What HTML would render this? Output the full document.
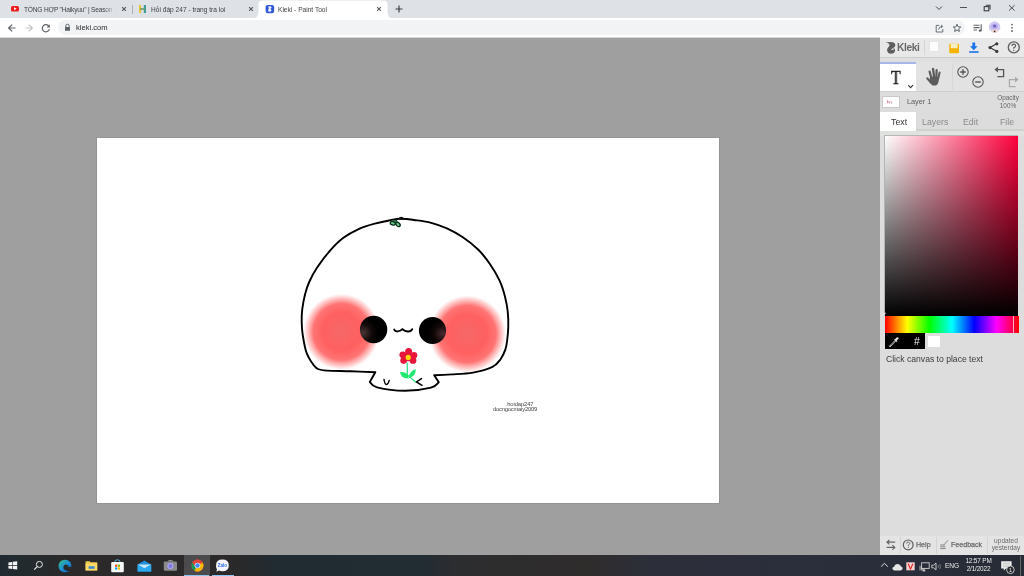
<!DOCTYPE html>
<html><head><meta charset="utf-8">
<style>
*{margin:0;padding:0;box-sizing:border-box}
html,body{width:1024px;height:576px;overflow:hidden;background:#9f9f9f;font-family:"Liberation Sans",sans-serif;-webkit-font-smoothing:antialiased}
.a{will-change:transform}
.a{position:absolute}
svg{position:absolute;overflow:visible}
#tabs{left:0;top:0;width:1024px;height:18px;background:#dee1e6}
#tool{left:0;top:18px;width:1024px;height:20px;background:#fff}
#omni{left:57.5px;top:20.2px;width:907.3px;height:15.4px;background:#f1f3f4;border-radius:7.7px}
#sep{left:0;top:37px;width:880px;height:1px;background:#d8d8d8}
#cv{left:97px;top:138px;width:622px;height:365px;background:#fff;box-shadow:0 0 0 1px rgba(60,60,60,.1)}
#side{left:880px;top:38px;width:144px;height:517px;background:#dddddd}
#task{left:0;top:555px;width:1024px;height:21px;background:linear-gradient(90deg,#1f2a30 0px,#262a2c 45px,#2b2929 70px,#2b2929 230px,#202b32 278px,#212c33 420px,#2c2d2f 455px,#2f2c2c 590px,#2c2f3a 650px,#2a2e3b 880px,#272b35 1024px)}
.tt{font-size:6.6px;color:#3f4246;white-space:nowrap;line-height:9px}
</style></head><body>
<!-- TAB STRIP -->
<div class="a" id="tabs"></div>
<!-- tab1 -->
<svg style="left:10px;top:5px" width="10" height="8"><rect x="1" y="1" width="8" height="5.6" rx="1.6" fill="#ee1b1b"/><path d="M4 2.3 L6.6 3.8 L4 5.3Z" fill="#fff"/></svg>
<div class="a tt" style="left:24px;top:4.5px;width:92px;overflow:hidden;letter-spacing:-.2px;-webkit-mask-image:linear-gradient(90deg,#000 86%,transparent)">TỔNG HỢP "Haikyuu" | Season 1</div>
<svg style="left:121px;top:6px" width="6" height="6"><path d="M1.1 1.1L4.9 4.9M4.9 1.1L1.1 4.9" stroke="#55585c" stroke-width="1.05"/></svg>
<div class="a" style="left:132px;top:5px;width:1px;height:9px;background:#aeb1b6"></div>
<!-- tab2 -->
<svg style="left:138px;top:4px" width="10" height="10"><rect x="1" y="1" width="2.2" height="8" fill="#e9c43a"/><rect x="5.8" y="1" width="2.2" height="8" fill="#3e9c9a"/><rect x="2" y="4.2" width="5" height="1.6" fill="#6a9c6a"/></svg>
<div class="a tt" style="left:150.5px;top:4.5px">Hỏi đáp 247 - trang tra loi</div>
<svg style="left:248px;top:6px" width="6" height="6"><path d="M1.1 1.1L4.9 4.9M4.9 1.1L1.1 4.9" stroke="#55585c" stroke-width="1.05"/></svg>
<!-- active tab -->
<svg style="left:252px;top:0" width="144" height="19"><path d="M0 18.5 Q6.4 18.5 6.4 12 L6.4 4.6 Q6.4 .4 10.6 .4 L131.4 .4 Q135.6 .4 135.6 4.6 L135.6 12 Q135.6 18.5 142 18.5 Z" fill="#fff"/></svg>
<svg style="left:265px;top:4px" width="10" height="10"><rect x="0.6" y="0.9" width="8.6" height="8.4" rx="2.2" fill="#3359d6"/><path d="M3.2 2.6Q5.6 1.8 6.6 3Q6.8 4.2 5.4 4.8Q6.8 5.6 6.4 7Q5.2 8.2 3.6 7.6Q2.6 6.8 3.4 5.6Q4.4 4.6 3.2 2.6Z" fill="#eef4ff"/></svg>
<div class="a tt" style="left:278px;top:4.5px">Kleki - Paint Tool</div>
<svg style="left:376px;top:6px" width="6" height="6"><path d="M1.1 1.1L4.9 4.9M4.9 1.1L1.1 4.9" stroke="#55585c" stroke-width="1.05"/></svg>
<svg style="left:395px;top:5px" width="8" height="8"><path d="M4 .5V7.5M.5 4H7.5" stroke="#3c4043" stroke-width="1.2"/></svg>
<!-- window controls -->
<svg style="left:934.5px;top:4.5px" width="8" height="6"><path d="M1 1.5L4 4.5L7 1.5" stroke="#45484c" stroke-width="1" fill="none"/></svg>
<div class="a" style="left:959.6px;top:7px;width:6.6px;height:.9px;background:#505356"></div>
<svg style="left:983px;top:4px" width="8" height="8"><rect x="1.2" y="2.6" width="4.6" height="4.2" stroke="#3c4043" stroke-width="1.1" fill="none"/><path d="M2.8 1.2H7V5.4" stroke="#3c4043" stroke-width="1.1" fill="none"/></svg>
<svg style="left:1008px;top:4px" width="8" height="8"><path d="M1 1.2L6.6 6.6M6.6 1.2L1 6.6" stroke="#3c4043" stroke-width="0.9"/></svg>

<!-- TOOLBAR -->
<div class="a" id="tool"></div>
<div class="a" id="omni"></div>
<div class="a" id="sep"></div>
<svg style="left:7px;top:23px" width="10" height="10"><path d="M8.5 5H2M5.2 1.6L1.6 5L5.2 8.4" stroke="#5f6368" stroke-width="1.2" fill="none"/></svg>
<svg style="left:23.5px;top:23px" width="10" height="10"><path d="M1.5 5H8M4.8 1.6L8.4 5L4.8 8.4" stroke="#c2c4c7" stroke-width="1.2" fill="none"/></svg>
<svg style="left:41px;top:23px" width="10" height="10"><path d="M7.9 3.3A3.6 3.6 0 1 0 8.4 6" stroke="#5f6368" stroke-width="1.2" fill="none"/><path d="M8.8 1.2V4.4H5.6Z" fill="#5f6368"/></svg>
<svg style="left:64px;top:23px" width="7" height="9"><path d="M1.8 4V2.9A1.7 1.7 0 0 1 5.2 2.9V4" stroke="#5f6368" stroke-width="1" fill="none"/><rect x="1" y="4" width="5" height="3.8" rx=".6" fill="#5f6368"/></svg>
<div class="a" style="left:75.8px;top:23.3px;font-size:7.6px;color:#2a2b2e;line-height:10px">kleki.com</div>
<svg style="left:935px;top:23.5px" width="10" height="9"><path d="M4.2 1.4H1.2V8H7.8V5" stroke="#5f6368" stroke-width=".9" fill="none"/><path d="M3.6 5.6Q3.8 2.6 7.2 2.4M6 .8L7.8 2.4L6 4" stroke="#5f6368" stroke-width=".9" fill="none"/></svg>
<svg style="left:952px;top:23px" width="10" height="10"><path d="M5 1.2L6.1 3.8L8.8 4L6.7 5.8L7.4 8.5L5 7L2.6 8.5L3.3 5.8L1.2 4L3.9 3.8Z" stroke="#5f6368" stroke-width="1" fill="none" stroke-linejoin="round"/></svg>
<svg style="left:972px;top:23px" width="12" height="10"><path d="M1.5 2.2H7.6M1.5 4.6H7.6M1.5 7H5" stroke="#5f6368" stroke-width="1.1"/><path d="M9.2 1.2V7.4" stroke="#5f6368" stroke-width="1.1"/><ellipse cx="8.2" cy="7.6" rx="1.5" ry="1.2" fill="#5f6368"/></svg>
<svg style="left:988px;top:21px" width="14" height="12"><circle cx="6.6" cy="6" r="5.8" fill="#d3ccf4"/><ellipse cx="6.6" cy="5.4" rx="3.6" ry="3" fill="#b9b0ec"/><path d="M2.6 9.8Q6.6 7.4 10.6 9.8Q8.6 11.8 6.6 11.8Q4.6 11.8 2.6 9.8Z" fill="#f6d7d2"/><circle cx="6.6" cy="5" r="1.5" fill="#6a5cc0"/><rect x="5.8" y="9.6" width="1.6" height="1.6" fill="#3a2b2b"/></svg>
<svg style="left:1010px;top:23px" width="4" height="10"><circle cx="2" cy="1.6" r=".9" fill="#5f6368"/><circle cx="2" cy="4.8" r=".9" fill="#5f6368"/><circle cx="2" cy="8" r=".9" fill="#5f6368"/></svg>

<!-- CANVAS -->
<div class="a" id="cv"></div>
<svg style="left:97px;top:138px" width="622" height="365" viewBox="97 138 622 365">
<defs>
<radialGradient id="bl"><stop offset="0" stop-color="#f66868"/><stop offset=".5" stop-color="#ff6060"/><stop offset=".74" stop-color="#ff6464" stop-opacity=".9"/><stop offset="1" stop-color="#ff7070" stop-opacity="0"/></radialGradient>
<radialGradient id="e1" cx=".1" cy=".62" r=".55" fx=".12" fy=".62"><stop offset="0" stop-color="#4a3434"/><stop offset=".6" stop-color="#120a0a"/><stop offset="1" stop-color="#000"/></radialGradient>
<radialGradient id="e2" cx=".9" cy=".62" r=".55" fx=".88" fy=".62"><stop offset="0" stop-color="#4a2a32"/><stop offset=".6" stop-color="#120808"/><stop offset="1" stop-color="#000"/></radialGradient>
</defs>
<path id="hd" d="M375.3 372.2 C371.2 372.1 358.9 371.6 350.8 371.3 C342.8 371.0 332.5 371.0 327.0 370.6 C321.5 370.2 320.3 370.0 318.0 369.0 C315.7 368.0 314.0 365.3 313.2 364.6 C312.6 363.6 310.6 361.0 309.4 358.6 C308.2 356.2 306.9 354.5 305.8 350.4 C304.7 346.3 303.3 338.7 302.6 334.0 C301.9 329.3 301.8 326.1 301.7 322.0 C301.6 317.9 301.7 314.3 302.2 309.7 C302.8 305.1 303.8 299.0 305.0 294.4 C306.2 289.8 307.2 286.4 309.2 282.0 C311.2 277.6 313.3 273.2 316.8 268.0 C320.3 262.8 325.6 255.7 330.0 250.7 C334.4 245.7 338.5 241.5 343.4 237.8 C348.2 234.2 353.9 231.2 359.1 228.8 C364.3 226.5 369.5 225.1 374.7 223.7 C379.9 222.3 386.1 221.0 390.3 220.2 C394.5 219.4 395.8 218.8 400.0 218.8 C404.2 218.8 410.4 219.5 415.6 220.2 C420.8 220.9 426.0 221.5 431.2 222.9 C436.5 224.3 441.7 226.1 446.9 228.4 C452.1 230.8 457.3 233.5 462.5 237.0 C467.7 240.5 473.5 245.0 478.1 249.5 C482.7 254.0 486.3 258.8 489.9 264.0 C493.5 269.2 497.1 275.1 499.6 280.7 C502.2 286.3 503.9 292.3 505.2 297.4 C506.5 302.5 507.2 306.5 507.7 311.3 C508.2 316.1 508.4 321.2 508.3 326.0 C508.2 330.8 507.7 336.1 507.2 340.0 C506.7 343.9 506.5 346.2 505.4 349.4 C504.3 352.6 502.8 356.2 500.6 359.2 C498.4 362.2 496.6 365.0 492.0 367.2 C487.4 369.4 479.7 371.4 473.0 372.6 C466.3 373.8 458.5 374.0 452.0 374.4 C445.5 374.8 437.2 375.1 434.2 375.2 L438.8 382.3 C437.5 383.2 436.6 386.2 431.0 387.6 C425.4 389.0 414.0 390.8 405.0 390.8 C396.0 390.8 382.9 388.9 377.0 387.4 C371.1 385.9 371.0 382.9 369.8 382.0 Z" fill="#fff"/>
<circle cx="341.5" cy="331.8" r="38" fill="url(#bl)"/>
<circle cx="467.4" cy="334" r="38.5" fill="url(#bl)"/>
<path d="M375.3 372.2 C371.2 372.1 358.9 371.6 350.8 371.3 C342.8 371.0 332.5 371.0 327.0 370.6 C321.5 370.2 320.3 370.0 318.0 369.0 C315.7 368.0 314.0 365.3 313.2 364.6 C312.6 363.6 310.6 361.0 309.4 358.6 C308.2 356.2 306.9 354.5 305.8 350.4 C304.7 346.3 303.3 338.7 302.6 334.0 C301.9 329.3 301.8 326.1 301.7 322.0 C301.6 317.9 301.7 314.3 302.2 309.7 C302.8 305.1 303.8 299.0 305.0 294.4 C306.2 289.8 307.2 286.4 309.2 282.0 C311.2 277.6 313.3 273.2 316.8 268.0 C320.3 262.8 325.6 255.7 330.0 250.7 C334.4 245.7 338.5 241.5 343.4 237.8 C348.2 234.2 353.9 231.2 359.1 228.8 C364.3 226.5 369.5 225.1 374.7 223.7 C379.9 222.3 386.1 221.0 390.3 220.2 C394.5 219.4 395.8 218.8 400.0 218.8 C404.2 218.8 410.4 219.5 415.6 220.2 C420.8 220.9 426.0 221.5 431.2 222.9 C436.5 224.3 441.7 226.1 446.9 228.4 C452.1 230.8 457.3 233.5 462.5 237.0 C467.7 240.5 473.5 245.0 478.1 249.5 C482.7 254.0 486.3 258.8 489.9 264.0 C493.5 269.2 497.1 275.1 499.6 280.7 C502.2 286.3 503.9 292.3 505.2 297.4 C506.5 302.5 507.2 306.5 507.7 311.3 C508.2 316.1 508.4 321.2 508.3 326.0 C508.2 330.8 507.7 336.1 507.2 340.0 C506.7 343.9 506.5 346.2 505.4 349.4 C504.3 352.6 502.8 356.2 500.6 359.2 C498.4 362.2 496.6 365.0 492.0 367.2 C487.4 369.4 479.7 371.4 473.0 372.6 C466.3 373.8 458.5 374.0 452.0 374.4 C445.5 374.8 437.2 375.1 434.2 375.2 L438.8 382.3 C437.5 383.2 436.6 386.2 431.0 387.6 C425.4 389.0 414.0 390.8 405.0 390.8 C396.0 390.8 382.9 388.9 377.0 387.4 C371.1 385.9 371.0 382.9 369.8 382.0 Z" fill="none" stroke="#000" stroke-width="1.9" stroke-linejoin="round"/>
<circle cx="373.6" cy="329.5" r="13.7" fill="url(#e1)"/>
<circle cx="432.5" cy="330.5" r="13.6" fill="url(#e2)"/>
<path d="M394.2 329.6 C395.2 332 399.4 332.2 402.4 329.2 C405.4 331.8 410.6 332.8 412.2 329.2" stroke="#000" stroke-width="1.9" fill="none" stroke-linecap="round"/>
<path d="M384 379.4 Q384.8 384.4 386.4 384.6 Q388.4 384 389.2 380.4" stroke="#000" stroke-width="1.4" fill="none" stroke-linecap="round"/>
<path d="M421.5 378.6 L416.4 382 L422 385.4" stroke="#000" stroke-width="1.5" fill="none" stroke-linecap="round"/>
<path d="M407.2 362.5 L407.4 375 L415.6 382" stroke="#33e088" stroke-width="1.3" fill="none"/>
<path d="M400 372.2Q404.6 371.6 407.6 374.2Q409 376.6 408.6 378.4Q404.4 378.8 402 376.4Q400.4 374.6 400 372.2Z" fill="#22e870"/>
<path d="M415.8 369Q416 373 413.6 375.6Q411.4 377.8 408.8 378Q408.6 374.6 411 372Q413 369.8 415.8 369Z" fill="#22e870"/>
<g fill="#e8163a"><circle cx="408.6" cy="351.6" r="3.5"/><circle cx="402.8" cy="354.8" r="3.4"/><circle cx="414" cy="355.2" r="3.3"/><circle cx="403.6" cy="360.6" r="3.3"/><circle cx="413" cy="360.4" r="3.4"/><circle cx="408.4" cy="357.2" r="4"/></g>
<circle cx="408.2" cy="357.4" r="2.6" fill="#f8d800"/>
<ellipse cx="392.8" cy="223.3" rx="2.6" ry="1.7" transform="rotate(15 392.8 223.3)" fill="#6cc890" stroke="#042a12" stroke-width="1.25"/>
<ellipse cx="398" cy="224.4" rx="2.6" ry="1.7" transform="rotate(45 398 224.4)" fill="#6cc890" stroke="#042a12" stroke-width="1.25"/>
<ellipse cx="395.2" cy="221.3" rx="2" ry="1.2" fill="#2f7a4a" stroke="#06361a" stroke-width=".8"/>
<ellipse cx="401.2" cy="218.2" rx="2.4" ry="1.5" fill="#111"/>
<text x="533.4" y="405.6" text-anchor="end" font-size="5.8" fill="#444" font-family="Liberation Sans" letter-spacing="-.1">hoidap247</text>
<text x="537" y="410.6" text-anchor="end" font-size="5.8" fill="#444" font-family="Liberation Sans" letter-spacing="-.2">docngocmaiy2009</text>
</svg>

<!-- SIDEBAR -->
<div class="a" id="side"></div>
<div class="a" style="left:880px;top:38px;width:144px;height:18.5px;background:#e8e8e8"></div>
<div class="a" style="left:880px;top:56.5px;width:144px;height:1.5px;background:#cdcdcd"></div>
<div class="a" style="left:880px;top:58px;width:144px;height:4px;background:#dfdfdf"></div>
<div class="a" style="left:923.5px;top:40px;width:1px;height:15px;background:#d6d6d6"></div>
<!-- logo -->
<svg style="left:885px;top:40.5px" width="12" height="14"><path d="M.4 1.6Q4.4 .4 8 1.2Q10.6 2 10.4 4.6Q10.2 6.2 8.6 6.8Q10.6 8 10 10.4Q9 12.8 6 12.8Q3 12.8 2.2 10.2Q1.6 7.8 3.8 5.6Q5 4.4 4.2 3Q3 1.8 .4 1.6Z" fill="#5e5e5e"/><path d="M6 8.4L8.4 6.8L8.6 9.2Z" fill="#e6e6e6"/></svg>
<div class="a" style="left:897.4px;top:42.2px;font-size:10.2px;font-weight:bold;color:#666;line-height:12px;letter-spacing:-.35px">Kleki</div>
<div class="a" style="left:930px;top:42.3px;width:7.6px;height:9.4px;background:#fdfdfd;box-shadow:0 0 0 .5px #e0e0e0"></div>
<svg style="left:948px;top:43px" width="12" height="11"><rect x="1.2" y="0.8" width="9.8" height="9.4" rx="1" fill="#f3b500"/><rect x="2.6" y="0.8" width="7" height="4.4" fill="#f9edc4"/></svg>
<svg style="left:968px;top:42px" width="12" height="12"><path d="M4.4 0.4H7.2V4.2H9.6L5.8 8.2L2 4.2H4.4Z" fill="#1a73e8"/><rect x="1.2" y="9.2" width="9.4" height="1.6" fill="#1a73e8"/></svg>
<svg style="left:988px;top:42px" width="12" height="12"><path d="M8.6 1.8L2 5.6L8.6 9.2" stroke="#3a3a3a" stroke-width="1.2" fill="none"/><circle cx="8.8" cy="1.8" r="1.6" fill="#3a3a3a"/><circle cx="2" cy="5.6" r="1.6" fill="#3a3a3a"/><circle cx="8.8" cy="9.4" r="1.6" fill="#3a3a3a"/></svg>
<svg style="left:1007px;top:41px" width="14" height="14"><circle cx="6.8" cy="6.4" r="5.5" stroke="#606060" stroke-width="1.35" fill="none"/><path d="M5 5Q5 3.2 6.8 3.2Q8.6 3.2 8.6 4.8Q8.6 6 6.8 6.6V7.8" stroke="#606060" stroke-width="1.2" fill="none"/><circle cx="6.8" cy="9.4" r=".65" fill="#555"/></svg>
<!-- tool row -->
<div class="a" style="left:880px;top:62px;width:144px;height:29px;background:#e2e2e2"></div>
<div class="a" style="left:880px;top:62px;width:36px;height:29px;background:#fff;border-top:2px solid #a6b6e8"></div>
<div class="a" style="left:880px;top:91px;width:144px;height:1px;background:#cfcfcf"></div>
<div class="a" style="left:952px;top:63px;width:1px;height:27px;background:#d8d8d8"></div>

<div class="a" style="left:891.4px;top:66.1px;font-family:'Liberation Serif',serif;font-size:17.5px;color:#1e1e1e;line-height:20px;-webkit-text-stroke:.35px #1e1e1e;transform:scale(.91,1.1);transform-origin:0 0">T</div>
<svg style="left:907px;top:84px" width="8" height="5"><path d="M1.2 1.2L3.6 3.6L6 1.2" stroke="#333" stroke-width="1.1" fill="none"/></svg>
<svg style="left:916px;top:62px" width="36" height="30"><g stroke="#5c5c5c" stroke-linecap="round" fill="none"><path d="M13.6 9.6L15.4 16" stroke-width="2.2"/><path d="M17 7L18.2 15" stroke-width="2.3"/><path d="M20.6 8.2L20.4 15.4" stroke-width="2.2"/><path d="M23.6 10.4L22.2 16.4" stroke-width="2"/><path d="M11.4 16.4L15 20.4" stroke-width="2.2"/></g><path d="M14 14.6L23.2 14.8L22.6 19.6Q21.4 23.6 19.6 23.6L16.6 23.6Q15.2 22.4 13.6 20.4Z" fill="#5c5c5c"/></svg>
<svg style="left:956px;top:65px" width="14" height="14"><circle cx="7" cy="7" r="5.2" stroke="#555" stroke-width="1.1" fill="none"/><path d="M7 4.2V9.8M4.2 7H9.8" stroke="#555" stroke-width="1.4"/></svg>
<svg style="left:970.5px;top:74.5px" width="14" height="14"><circle cx="7" cy="7" r="5.2" stroke="#555" stroke-width="1.1" fill="none"/><path d="M4.2 7H9.8" stroke="#555" stroke-width="1.4"/></svg>
<svg style="left:993px;top:66px" width="13" height="13"><path d="M4.8 3.6H10.6V10.6H4.4" stroke="#555" stroke-width="1.3" fill="none"/><path d="M1.4 3.6L5 0.8V6.4Z" fill="#555"/></svg>
<svg style="left:1007px;top:76px" width="13" height="13"><path d="M8.2 3.6H2.4V10.6H8.6" stroke="#aaa" stroke-width="1.2" fill="none"/><path d="M11.6 3.6L8 0.8V6.4Z" fill="#aaa"/></svg>
<!-- layer row -->
<div class="a" style="left:882px;top:96px;width:17.5px;height:12px;background:#fff;border:1px solid #c8c8c8"></div>
<svg style="left:886px;top:99px" width="10" height="6"><path d="M1.5 1.2V4.2M2 3Q3.4 1.4 3.6 4.4M4.4 2L6 3.4L5.2 4.6" stroke="#c94a6a" stroke-width=".6" fill="none"/></svg>
<div class="a" style="left:906.8px;top:97.4px;font-size:7.3px;color:#5e5e5e;line-height:9px">Layer 1</div>
<div class="a" style="left:991px;top:93.6px;width:34px;text-align:center;font-size:6.4px;color:#666;line-height:8px">Opacity<br>100%</div>
<!-- tabs -->
<div class="a" style="left:880px;top:112px;width:144px;height:18.8px;background:#dcdcdc;border-bottom:2px solid #d0d0d0"></div>
<div class="a" style="left:880px;top:112px;width:36.3px;height:18.8px;background:#fff"></div>
<div class="a" style="left:890.5px;top:115.5px;font-size:8.8px;color:#333;line-height:12px">Text</div>
<div class="a" style="left:921.5px;top:115.5px;font-size:8.8px;color:#8a8a8a;line-height:12px">Layers</div>
<div class="a" style="left:963px;top:115.5px;font-size:8.8px;color:#8a8a8a;line-height:12px">Edit</div>
<div class="a" style="left:999.5px;top:115.5px;font-size:8.8px;color:#8a8a8a;line-height:12px">File</div>
<!-- color picker -->
<div class="a" style="left:880px;top:130.8px;width:144px;height:5px;background:#e0e2e0"></div>
<div class="a" style="left:884.6px;top:136px;width:133.2px;height:180.2px;background:linear-gradient(to bottom,rgba(0,0,0,0),#000),linear-gradient(to right,#fff,#ff003c);box-shadow:-.5px -.5px 0 .3px #aaa"></div>
<div class="a" style="left:884.6px;top:316.2px;width:133.6px;height:16.8px;background:linear-gradient(to right,#f00 0%,#ff0 16.67%,#0f0 33.33%,#0ff 50%,#00f 66.67%,#f0f 83.33%,#f00 100%)"></div>
<div class="a" style="left:1012.6px;top:316.2px;width:.8px;height:16.8px;background:#fff;opacity:.7"></div>
<svg style="left:882px;top:311px" width="6" height="6"><path d="M1.5 4.5A2.4 2.4 0 0 1 4 2" stroke="#fff" stroke-width=".7" fill="none"/></svg>
<div class="a" style="left:885.4px;top:333.2px;width:39.8px;height:16.1px;background:#000"></div>
<svg style="left:888px;top:336px" width="12" height="12"><path d="M2 10.2L7.4 4.8" stroke="#e0e0e0" stroke-width="1.6" stroke-linecap="round"/><path d="M2.6 9.6L7 5.2" stroke="#000" stroke-width=".6"/><path d="M6.2 3.6L8.6 6L9.4 5.2L8.8 4.6L10.4 3Q11 2 10.2 1.4Q9.4 .8 8.6 1.6L7 3.2L6.6 2.8Z" fill="#e0e0e0"/></svg>
<div class="a" style="left:913.6px;top:335.6px;font-size:10.4px;color:#f0f0f0;line-height:11px">#</div>
<div class="a" style="left:927.8px;top:336px;width:11.8px;height:11.2px;background:#fff"></div>
<div class="a" style="left:885.8px;top:353.6px;font-size:8.6px;color:#3a3a3a;line-height:11px">Click canvas to place text</div>
<!-- footer -->
<div class="a" style="left:880px;top:535.5px;width:144px;height:19px;background:#e4e4e4"></div>
<div class="a" style="left:900.3px;top:536.5px;width:.8px;height:17px;background:#d4d4d4"></div>
<div class="a" style="left:936.2px;top:536.5px;width:.8px;height:17px;background:#d4d4d4"></div>
<div class="a" style="left:987.4px;top:536.5px;width:.8px;height:17px;background:#d4d4d4"></div>
<svg style="left:885px;top:539px" width="12" height="12"><path d="M10.2 3.2H2.2M4.4 1L2 3.2L4.4 5.4M1.6 8.4H9.6M7.4 6.2L9.8 8.4L7.4 10.6" stroke="#666" stroke-width="1.2" fill="none"/></svg>
<svg style="left:902px;top:539px" width="12" height="12"><circle cx="6.2" cy="5.9" r="4.9" stroke="#5e5e5e" stroke-width="1.2" fill="none"/><path d="M4.6 4.6Q4.6 3 6.2 3Q7.8 3 7.8 4.4Q7.8 5.4 6.3 6V7.2" stroke="#666" stroke-width=".9" fill="none"/><circle cx="6.3" cy="8.6" r=".55" fill="#666"/></svg>
<div class="a" style="left:915.8px;top:540.6px;font-size:7.1px;color:#6a6a6a;line-height:9px;-webkit-text-stroke:.25px #6a6a6a">Help</div>
<svg style="left:939px;top:539px" width="10" height="11"><path d="M1.2 6H5.6M1.2 7.8H6.4M1.2 9.6H6.6" stroke="#6a6a6a" stroke-width=".75"/><path d="M4.6 6.2L8.8 1.4" stroke="#888" stroke-width="1"/></svg>
<div class="a" style="left:951px;top:540.6px;font-size:7.1px;color:#6a6a6a;line-height:9px;-webkit-text-stroke:.25px #6a6a6a">Feedback</div>
<div class="a" style="left:988px;top:537.2px;width:36px;text-align:center;font-size:6.6px;color:#6a6a6a;line-height:7.4px">updated<br>yesterday</div>

<!-- TASKBAR -->
<div class="a" id="task"></div>
<!-- start -->
<svg style="left:8px;top:561px" width="10" height="9"><path d="M0.4 1.4L4.2 0.9V4.1H0.4ZM4.8 0.8L9.2 0.2V4.1H4.8ZM0.4 4.7H4.2V7.9L0.4 7.4ZM4.8 4.7H9.2V8.6L4.8 8Z" fill="#f4f4f4"/></svg>
<svg style="left:33px;top:560px" width="11" height="11"><circle cx="6.4" cy="4.4" r="3" stroke="#e8e8e8" stroke-width="1" fill="none"/><path d="M4.2 6.6L1.2 9.6" stroke="#e8e8e8" stroke-width="1.2"/></svg>
<!-- edge -->
<svg style="left:58px;top:559px" width="15" height="14"><defs><linearGradient id="eg" x1="0" y1="0" x2="1" y2="1"><stop offset="0" stop-color="#39c27a"/><stop offset=".5" stop-color="#1e90d8"/><stop offset="1" stop-color="#0b5fb8"/></linearGradient></defs><path d="M13.4 7.8Q13.6 2.6 9.6 1.2Q5.2 -.2 2.2 2.6Q.2 4.8 .6 8Q1.2 11.8 5.2 13Q9 13.8 12 11.8Q9 12.4 7 11Q5 9.6 5.4 7.4Q5.8 5.6 8 5.4Q10 5.4 10.6 7Q9.8 7.8 7.8 7.8Z" fill="url(#eg)"/></svg>
<!-- explorer -->
<svg style="left:85px;top:560px" width="13" height="11"><path d="M.6 1.2H4.6L5.6 2.2H12.2V10.4H.6Z" fill="#f3c64f"/><rect x=".6" y="3.4" width="11.6" height="7" fill="#ffd966"/><rect x="3.6" y="6.2" width="6" height="2.6" fill="#3a8ccf"/></svg>
<!-- store -->
<svg style="left:110px;top:559px" width="15" height="14"><path d="M4.6 3.2Q4.6 .8 7.4 .8Q10.2 .8 10.2 3.2" stroke="#56b8e8" stroke-width="1" fill="none"/><rect x="1.2" y="3" width="12.6" height="10.2" rx="1" fill="#f6f6f6"/><rect x="5" y="5.6" width="2.2" height="2.2" fill="#f25022"/><rect x="7.8" y="5.6" width="2.2" height="2.2" fill="#7fba00"/><rect x="5" y="8.4" width="2.2" height="2.2" fill="#00a4ef"/><rect x="7.8" y="8.4" width="2.2" height="2.2" fill="#ffb900"/></svg>
<!-- mail -->
<svg style="left:137px;top:560px" width="15" height="12"><path d="M.6 4.6L7.4 .6L14.2 4.6V11.4H.6Z" fill="#1e8fe0"/><path d="M.6 4.6L7.4 8.4L14.2 4.6" fill="#c8e6fa"/><path d="M.6 4.6L7.4 8.6L14.2 4.6V11.4H.6Z" fill="#2aa8f0"/></svg>
<!-- camera -->
<svg style="left:163px;top:559px" width="15" height="13"><path d="M4.6 2.4L5.8 1H9.2L10.4 2.4Z" fill="#8e8e8e"/><rect x=".8" y="2.4" width="13.2" height="9.4" rx="1.2" fill="#8a8a8a"/><circle cx="7.4" cy="7" r="3.1" fill="#a9a3f5"/><circle cx="7.4" cy="7" r="1.9" fill="#7e78e0"/></svg>
<!-- chrome active -->
<div class="a" style="left:183.5px;top:555px;width:26px;height:21px;background:#4b4a4c"></div>
<div class="a" style="left:184px;top:574.6px;width:25px;height:1.4px;background:#8fc4f0"></div>
<svg style="left:190.5px;top:559px" width="13" height="13"><circle cx="6.5" cy="6.5" r="6" fill="#db4437"/><path d="M6.5 6.5L1.3 3.5A6 6 0 0 0 3.5 11.7Z" fill="#0f9d58"/><path d="M6.5 6.5L3.5 11.7A6 6 0 0 0 12.5 6.5V6Q12.3 4.5 11.7 3.5Z" fill="#f4b400"/><path d="M6.5 .5A6 6 0 0 0 1.3 3.5L3.5 7.2L6.5 3.5H11.7A6 6 0 0 0 6.5 .5Z" fill="#db4437"/><circle cx="6.5" cy="6.5" r="2.8" fill="#fff"/><circle cx="6.5" cy="6.5" r="2.2" fill="#4285f4"/></svg>
<!-- zalo -->
<div class="a" style="left:211.5px;top:574.6px;width:21.5px;height:1.4px;background:#8fc4f0"></div>
<svg style="left:215px;top:559px" width="15" height="14"><path d="M7.4 .6Q13.8 .6 13.8 6.4Q13.8 12.2 7.4 12.2Q5.4 12.2 4 11.6L1.4 12.8L2 10.2Q1 8.8 1 6.4Q1 .6 7.4 .6Z" fill="#f4f7ff"/><text x="7.4" y="8.2" text-anchor="middle" font-size="4.6" font-weight="bold" fill="#2e6ff2" font-family="Liberation Sans">Zalo</text></svg>
<!-- tray -->
<svg style="left:880px;top:562px" width="9" height="6"><path d="M1 4.6L4.4 1.4L7.8 4.6" stroke="#dcdcdc" stroke-width="1" fill="none"/></svg>
<svg style="left:892px;top:563px" width="11" height="8"><path d="M2.4 7.4Q.4 7.4 .4 5.6Q.4 4 2.2 3.8Q2.8 1 5.6 1Q8.4 1 9 3.6Q10.6 3.8 10.6 5.6Q10.6 7.4 8.6 7.4Z" fill="#e6e6e6"/></svg>
<svg style="left:905.5px;top:561.5px" width="9" height="9"><rect x=".3" y=".3" width="8.4" height="8" fill="#f3d0d0"/><path d="M2.2 1.8L4.5 7.2L6.8 1.8" stroke="#d22" stroke-width="1.1" fill="none"/></svg>
<svg style="left:918.5px;top:561.5px" width="11" height="10"><rect x="2.6" y=".8" width="7.6" height="5.6" stroke="#cfcfcf" stroke-width=".9" fill="none"/><path d="M1 3.6V8.4M2.4 4.6V8.4M3.8 6V8.4" stroke="#cfcfcf" stroke-width=".8"/><rect x="3.6" y="7.4" width="2.6" height="2" fill="#cfcfcf"/></svg>
<svg style="left:930.5px;top:562px" width="11" height="9"><path d="M.8 3.2H2.6L5 1V8L2.6 5.8H.8Z" stroke="#d0d0d0" stroke-width=".9" fill="none"/><path d="M7 3Q7.8 4.5 7 6M8.8 2Q10 4.5 8.8 7" stroke="#9a9a9a" stroke-width=".7" fill="none"/></svg>
<div class="a" style="left:944.5px;top:561.6px;font-size:6.6px;color:#ececec;line-height:8px;letter-spacing:-.1px">ENG</div>
<div class="a" style="left:963px;top:556.8px;width:31px;text-align:center;font-size:6.4px;color:#efefef;line-height:8px;letter-spacing:-.15px">12:57 PM<br>2/1/2022</div>
<svg style="left:1000px;top:560px" width="17" height="15"><path d="M1.2 1.2H11.6V8.4H6L3.8 10.4V8.4H1.2Z" fill="#f0f0f0"/><path d="M2.8 3.2H10M2.8 5H10M2.8 6.8H8" stroke="#aaa" stroke-width=".6"/><circle cx="10.4" cy="9.8" r="3.8" fill="#2b2d33" stroke="#cfcfcf" stroke-width=".9"/><text x="10.4" y="11.9" text-anchor="middle" font-size="5.4" fill="#eee" font-family="Liberation Sans">1</text></svg>
<div class="a" style="left:1019.5px;top:556px;width:.8px;height:20px;background:#666"></div>
</body></html>
